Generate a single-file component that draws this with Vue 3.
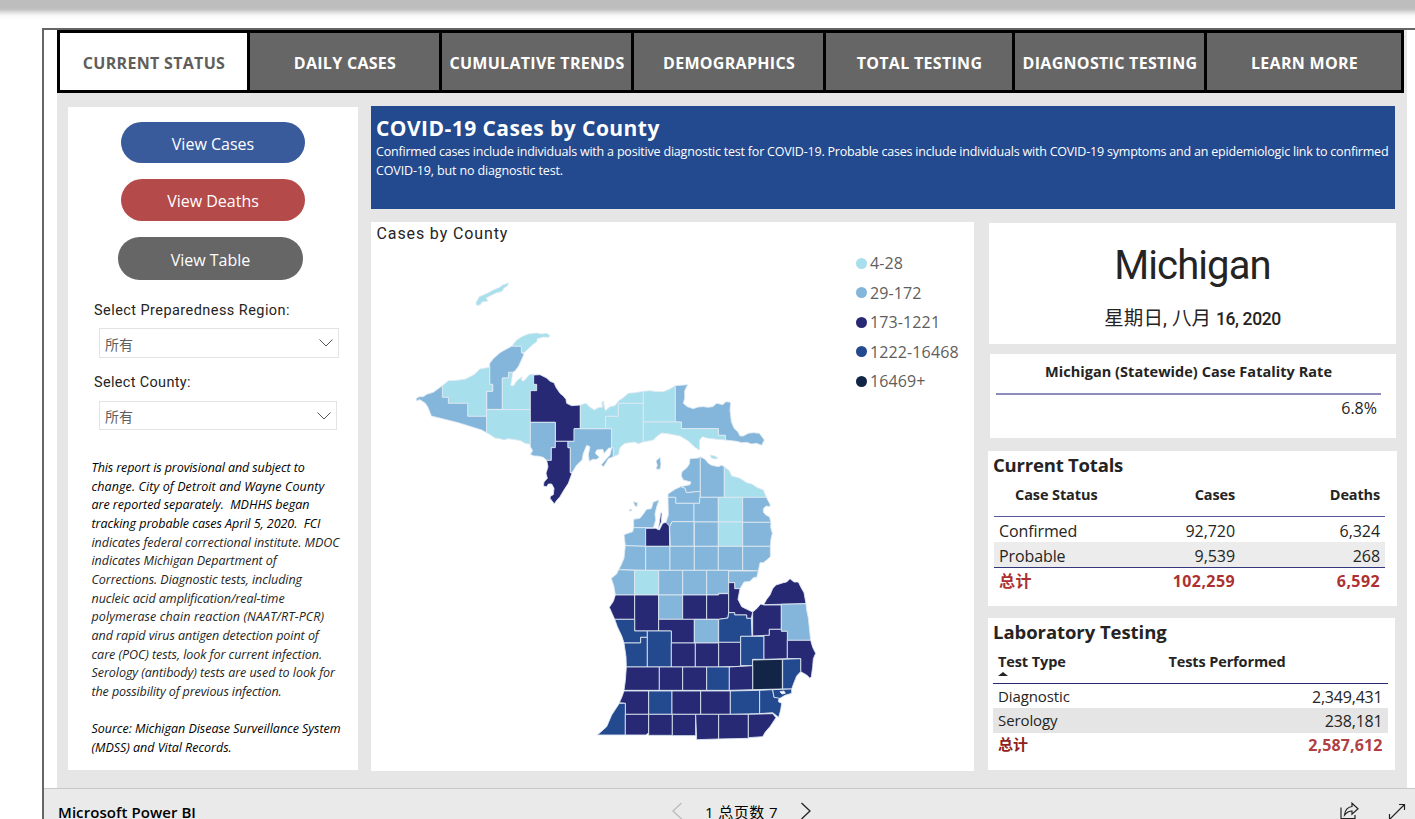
<script setup>
const tabs = ['CURRENT STATUS', 'DAILY CASES', 'CUMULATIVE TRENDS', 'DEMOGRAPHICS', 'TOTAL TESTING', 'DIAGNOSTIC TESTING', 'LEARN MORE']

const notes = [
  'This report is provisional and subject to',
  'change. City of Detroit and Wayne County',
  'are reported separately.\u00a0 MDHHS began',
  'tracking probable cases April 5, 2020.\u00a0 FCI',
  'indicates federal correctional institute. MDOC',
  'indicates Michigan Department of',
  'Corrections. Diagnostic tests, including',
  'nucleic acid amplification/real-time',
  'polymerase chain reaction (NAAT/RT-PCR)',
  'and rapid virus antigen detection point of',
  'care (POC) tests, look for current infection.',
  'Serology (antibody) tests are used to look for',
  'the possibility of previous infection.',
  '\u00a0',
  'Source: Michigan Disease Surveillance System',
  '(MDSS) and Vital Records.',
]

const legend = [
  ['a', '4-28'],
  ['b', '29-172'],
  ['c', '173-1221'],
  ['d', '1222-16468'],
  ['e', '16469+'],
]

// Counties grouped by map section; each entry is [bucket, outline].
const sections = [
  { at: 'translate(400 260) scale(.33333)', counties: [
    ['a', '228,128 238,110 262,100 280,90 300,82 306,76 326,69 322,78 312,84 306,94 288,99 270,108 258,114 264,123 246,126 240,135 230,136'],
    ['a', '335,259 350,240 364,231 385,222 410,219 425,222 440,220 450,227 446,232 430,231 420,234 412,236 410,246 400,252 390,262 372,278 364,278 364,259'],
    ['b', '335,259 364,259 364,278 372,282 366,296 356,318 345,333 338,337 326,337 326,354 307,354 307,448 260,448 260,394 278,394 278,373 269,373 269,310 280,296 300,278 318,268'],
    ['a', '269,322 240,327 222,344 195,358 160,362 145,362 127,377 127,412 145,412 145,430 203,430 203,469 260,469 260,394 278,394 278,373 269,373'],
    ['b', '127,377 100,397 80,403 70,410 58,410 48,416 50,422 60,419 76,430 84,442 94,468 175,488 245,510 260,518 260,469 203,469 203,430 145,430 145,412 127,412'],
    ['a', '326,337 338,337 335,360 332,376 340,378 350,363 366,350 364,360 370,364 378,356 387,345 400,342 401,373 410,373 410,392 391,392 391,449 307,449 307,354 326,354'],
    ['a', '260,449 391,449 391,553 375,550 362,542 345,539 325,536 312,540 300,536 285,534 270,524 260,518'],
    ['c', '401,345 420,344 440,354 450,364 462,368 468,382 480,400 490,408 498,418 500,430 515,437 541,435 541,506 523,506 523,544 466,544 466,487 391,487 391,392 410,392 410,373 401,373'],
    ['b', '391,487 466,487 466,563 454,563 454,601 440,601 430,592 412,588 402,588 391,583 398,572 391,560'],
    ['c', '466,544 504,544 504,563 511,563 511,638 516,640 505,670 492,690 480,710 468,724 463,732 450,715 452,708 460,704 462,685 455,672 445,672 440,680 430,678 432,666 442,655 438,640 444,620 440,601 454,601 454,563 466,563'],
  ] },
  { at: 'translate(560 360) scale(.33333)', counties: [
    ['b', '42,206 155,206 155,263 145,265 133,280 128,268 110,270 106,280 118,292 110,298 98,298 88,304 85,285 90,260 80,256 70,280 66,300 50,315 37,337 31,337 31,263 24,263 24,244 42,244'],
    ['b', '155,263 160,263 160,290 145,296 136,312 130,320 124,314 138,298 150,285'],
    ['a', '61,135 78,130 88,140 103,150 115,143 127,142 126,126 131,124 132,136 136,152 150,140 165,137 176,122 190,113 205,100 225,98 250,94 250,130 175,130 175,169 137,169 137,206 61,206'],
    ['a', '175,130 250,130 250,246 235,251 224,246 210,248 195,250 182,260 178,268 176,283 160,290 160,263 155,263 155,206 137,206 137,169 175,169'],
    ['a', '250,94 270,92 290,95 310,95 328,88 346,77 346,186 250,186'],
    ['b', '346,77 383,74 374,92 374,115 370,130 382,140 400,146 415,141 430,140 445,142 458,140 470,130 488,134 498,125 512,127 510,150 514,185 522,205 534,216 540,228 550,228 565,220 580,218 598,220 613,240 605,256 590,250 575,252 560,247 545,248 530,244 496,240 496,226 475,226 475,206 364,206 364,186 346,186'],
    ['a', '250,186 364,186 364,206 475,206 475,226 496,226 496,240 470,238 440,234 427,230 419,240 418,270 405,262 385,243 360,228 330,222 305,219 292,228 280,240 250,246'],
    ['a', '450,285 465,288 474,294 468,297 455,295'],
    ['b', '288,303 300,292 303,312 300,328 288,327 292,316'],
    ['b', '220,425 232,428 231,440 225,438'],
    ['b', '208,448 216,449 214,453 208,453'],
  ] },
  { at: 'translate(590 440) scale(.33333)', counties: [
    ['b', '300,56 325,54 331,50 331,154 289,158 285,145 272,140 300,134 303,126 280,120 274,108 276,95 290,84 298,72'],
    ['b', '331,50 345,58 355,70 365,76 385,80 395,76 403,80 403,172 331,172'],
    ['a', '403,80 418,92 425,108 440,112 450,115 470,128 485,132 500,142 520,150 529,172 403,172'],
    ['b', '272,140 285,145 289,158 331,154 329,190 257,190 257,172 234,172 234,162 255,148'],
    ['b', '234,172 257,172 257,190 312,190 312,245 246,245 239,260 228,247 235,225'],
    ['b', '312,190 329,190 329,172 385,172 385,246 312,246'],
    ['a', '385,172 458,172 458,246 385,246'],
    ['b', '458,172 529,172 540,193 540,200 528,198 520,206 520,216 527,225 538,230 543,247 458,247'],
    ['b', '131,238 150,235 160,222 170,208 184,206 190,186 207,180 200,200 195,222 197,240 190,263 131,263'],
    ['b', '131,263 167,263 167,319 106,317 102,284 128,275'],
    ['c', '167,265 197,265 208,270 218,250 228,247 238,258 239,319 167,319'],
    ['c', '212,218 216,220 214,246 205,266 210,235'],
    ['b', '239,260 246,245 312,245 312,319 241,319'],
    ['b', '313,246 385,246 385,319 313,319'],
    ['a', '385,246 458,246 458,319 385,319'],
    ['b', '458,247 543,247 542,262 547,280 543,296 541,319 458,319'],
    ['b', '106,317 167,319 167,391 86,389 94,374 102,355'],
    ['b', '167,319 240,319 240,391 167,391'],
    ['b', '240,319 313,319 313,391 240,391'],
    ['b', '313,319 385,319 385,391 313,391'],
    ['b', '385,319 458,319 458,391 385,391'],
    ['b', '458,319 541,319 541,350 530,360 520,368 510,368 505,393 458,391'],
    ['b', '86,389 134,391 134,465 76,465 72,440 64,415 80,402'],
    ['a', '134,391 206,391 206,465 134,465'],
    ['b', '206,391 278,391 278,465 206,465'],
    ['b', '278,391 350,391 350,465 278,465'],
    ['b', '350,391 416,391 416,460 386,460 386,465 350,465'],
    ['b', '416,393 505,393 500,412 492,412 480,424 462,426 450,446 434,446 434,428 416,428'],
  ] },
  { at: 'translate(590 560) scale(.33333)', counties: [
    ['c', '76,105 134,105 134,178 74,178 66,160 58,142 70,124'],
    ['c', '134,105 206,105 206,213 134,213'],
    ['b', '206,105 278,105 278,178 206,178'],
    ['c', '278,105 350,105 350,178 278,178'],
    ['c', '350,105 386,105 386,101 416,101 416,158 414,174 386,178 350,178'],
    ['c', '416,68 434,68 434,86 450,86 444,118 455,140 475,150 488,156 484,175 470,175 470,165 434,165 434,158 416,158'],
    ['d', '74,178 134,178 134,213 172,213 172,232 152,232 152,249 102,249 96,230 82,200'],
    ['c', '206,178 313,178 313,249 244,249 244,213 206,213'],
    ['b', '313,178 385,178 385,249 313,249'],
    ['d', '386,178 414,174 416,158 434,158 434,165 470,165 470,175 484,175 486,229 452,229 452,247 386,247'],
    ['c', '488,156 500,146 512,132 522,135 574,135 574,208 538,208 538,226 488,228'],
    ['c', '522,132 530,118 540,105 548,86 558,75 580,68 590,66 600,56 612,66 625,66 634,84 642,98 648,131 522,134'],
    ['b', '574,133 648,131 650,150 655,175 662,241 592,241 592,214 574,214'],
    ['d', '102,249 152,249 152,232 172,232 172,321 109,321 108,290'],
    ['d', '172,213 244,213 244,321 172,321'],
    ['c', '244,249 316,249 316,321 244,321'],
    ['c', '316,249 386,249 386,321 316,321'],
    ['c', '386,247 452,247 452,319 386,321'],
    ['d', '452,229 522,229 522,298 488,298 488,317 452,317'],
    ['c', '522,226 538,226 538,208 574,208 574,214 592,214 592,296 522,298'],
    ['c', '592,241 662,241 668,262 677,280 670,296 668,320 664,350 660,355 650,345 632,335 632,296 592,296'],
    ['d', '578,298 632,296 632,335 620,348 612,368 605,387 578,387'],
    ['e', '488,300 577,298 577,387 488,389'],
    ['c', '109,321 208,321 208,391 102,391 106,362'],
    ['c', '208,321 278,321 278,391 208,391'],
    ['c', '278,321 350,321 350,391 278,391'],
    ['d', '350,321 418,321 418,391 350,391'],
    ['c', '418,321 488,317 488,389 418,391'],
    ['c', '102,393 176,393 176,463 106,463 106,430 88,428 96,410'],
    ['d', '176,393 246,393 246,463 176,463'],
    ['c', '246,393 332,393 332,463 246,463'],
    ['c', '332,393 421,393 421,463 332,463'],
    ['d', '421,393 509,391 509,461 421,463'],
    ['d', '509,391 548,389 552,412 568,412 565,425 575,430 572,450 566,472 548,458 509,461'],
    ['d', '548,389 605,387 605,400 585,406 570,415 552,412'],
    ['w', '570,395 582,393 586,400 576,402'],
    ['d', '88,430 106,430 106,525 22,525 50,500 65,465'],
    ['c', '106,463 176,463 176,518 168,525 106,525'],
    ['c', '176,463 247,463 247,526 176,526'],
    ['c', '247,463 317,463 317,527 247,527'],
    ['c', '317,463 386,463 386,537 320,539'],
    ['c', '386,463 475,463 475,535 386,537'],
    ['c', '475,463 548,461 558,473 540,500 526,516 518,530 475,533'],
  ] },
]
</script>

<template>
  <div class="page">
    <div class="shade"></div>
    <div class="frame">
      <div class="report">
        <nav class="tabs">
          <div v-for="(t, i) in tabs" :key="t" class="tab" :class="{ active: i === 0 }">{{ t }}</div>
        </nav>
        <div class="body">
          <aside class="side">
            <button class="pill cases">View Cases</button>
            <button class="pill deaths">View Deaths</button>
            <button class="pill table">View Table</button>
            <label class="lab l1">Select Preparedness Region:</label>
            <div class="select s1">所有<svg viewBox="0 0 14 8"><path d="M.5 .5 7 7 13.500 .5" /></svg></div>
            <label class="lab l2">Select County:</label>
            <div class="select s2">所有<svg viewBox="0 0 14 8"><path d="M.5 .5 7 7 13.500 .5" /></svg></div>
            <div class="notes">
              <div v-for="(n, i) in notes" :key="i" :class="{ soft: i > 3 && i < 13, loose: i === 1 || i === 8, tight: i === 0 || i === 12 }">{{ n }}</div>
            </div>
          </aside>
          <main class="main">
            <header class="banner">
              <h1>COVID-19 Cases by County</h1>
              <p>Confirmed cases include individuals with a positive diagnostic test for COVID-19. Probable cases include individuals with COVID-19 symptoms and an epidemiologic link to confirmed</p>
              <p>COVID-19, but no diagnostic test.</p>
            </header>
            <div class="cols">
              <section class="map">
                <h2>Cases by County</h2>
                <svg class="counties" viewBox="371 222 603 549">
                  <g v-for="(s, i) in sections" :key="i" :transform="s.at">
                    <polygon v-for="(c, j) in s.counties" :key="j" :class="'k-' + c[0]" :points="c[1]" />
                  </g>
                </svg>
                <ul class="legend">
                  <li v-for="l in legend" :key="l[0]"><i :class="'k-' + l[0]"></i>{{ l[1] }}</li>
                </ul>
              </section>
              <div class="cards">
                <section class="card state">
                  <div class="name">Michigan</div>
                  <div class="date"><span class="cjk">星期日, 八月 </span>16, 2020</div>
                </section>
                <section class="card rate">
                  <h3>Michigan (Statewide) Case Fatality Rate</h3>
                  <div class="val">6.8%</div>
                </section>
                <section class="card totals">
                  <h4>Current Totals</h4>
                  <div class="row head"><span class="c1">Case Status</span><span class="c2">Cases</span><span class="c3">Deaths</span></div>
                  <div class="row"><span class="c1">Confirmed</span><span class="c2">92,720</span><span class="c3">6,324</span></div>
                  <div class="row alt"><span class="c1">Probable</span><span class="c2">9,539</span><span class="c3">268</span></div>
                  <div class="row sum"><span class="c1">总计</span><span class="c2">102,259</span><span class="c3">6,592</span></div>
                </section>
                <section class="card lab-tests">
                  <h4>Laboratory Testing</h4>
                  <div class="row head"><span class="c1">Test Type</span><span class="c2">Tests Performed</span><i class="sort"></i></div>
                  <div class="row"><span class="c1">Diagnostic</span><span class="c3">2,349,431</span></div>
                  <div class="row alt"><span class="c1">Serology</span><span class="c3">238,181</span></div>
                  <div class="row sum"><span class="c1">总计</span><span class="c3">2,587,612</span></div>
                </section>
              </div>
            </div>
          </main>
        </div>
      </div>
      <footer class="foot">
        <span class="brand">Microsoft Power BI</span>
        <div class="pager">
          <svg class="off" viewBox="0 0 12 18"><path d="M10.500 1 2 9l8.500 8" /></svg>
          <span>1 总页数 7</span>
          <svg viewBox="0 0 12 18"><path d="M1.500 1 10 9l-8.500 8" /></svg>
        </div>
        <svg class="share" viewBox="0 0 19 18"><path d="M1 5.500V16.500H15V13M4.500 13C5 8 8 5 12 4.500V1.200L18 6.700 12 12.200V9C9 9 7 10 4.500 13Z" /></svg>
        <svg class="expand" viewBox="0 0 18 18"><path d="M1.500 16.500 16.500 1.500M11 1.500h5.500V7M1.500 11v5.500H7" /></svg>
      </footer>
    </div>
  </div>
</template>

<style>
html, body { overflow: hidden; background: #fff; }
</style>
<style scoped>
.page { width: 1415px; height: 819px; overflow: hidden; background: #fff; color: #252423; font-family: "Open Sans", "Noto Sans CJK SC", sans-serif; font-size: 16px; white-space: nowrap; }
.page * { box-sizing: border-box; }
h1, h2, h3, h4, p, ul { margin: 0; padding: 0; }
.shade { height: 28px; background: linear-gradient(#bdbdbd 0, #bdbdbd 8px, #c6c6c6 10px, #e6e6e6 13px, #f9f9f9 16px, #fff 20px); }
.frame { margin-left: 42px; height: 791px; border-left: 2px solid #666; border-top: 2px solid #666; display: flex; flex-direction: column; }
.report { flex: none; margin-left: 13px; width: 1350px; height: 758px; background: #e6e6e6; }
.tabs { width: 1347px; height: 63px; padding: 3px; background: #000; display: grid; grid-template-columns: 187px 189px 189px 189px 186px 189px 194px; column-gap: 3px; }
.tab { background: #666; color: #fff; font-weight: 700; font-size: 16px; letter-spacing: .3px; display: flex; align-items: center; justify-content: center; padding: 2px 0 0 1px; }
.tab.active { background: #fff; color: #605e5c; }
.body { display: flex; padding: 14px 0 0 11px; }
.side { width: 290px; height: 663px; background: #fff; display: flex; flex-direction: column; align-items: flex-start; padding: 15px 0 0 26px; }
.pill { border: 0; padding: 2px 0 0; border-radius: 22px; color: #fff; font: 400 16px "Open Sans", sans-serif; width: 184px; margin-left: 27px; }
.cases { height: 41px; background: #3a5b9b; }
.deaths { height: 42px; margin-top: 16px; background: #b54a4a; }
.table { height: 43px; width: 185px; margin: 16px 0 0 24px; background: #666; }
.lab { height: 20px; line-height: 22px; font-family: Roboto, sans-serif; font-size: 14.500px; font-weight: 400; letter-spacing: .44px; }
.l1 { margin-top: 20px; }
.l2 { margin-top: 14px; letter-spacing: .33px; }
.select { margin-left: 5px; border: 1px solid #e3e3e3; display: flex; align-items: center; justify-content: space-between; padding: 1px 5px 0 5px; color: #605e5c; font-size: 14px; }
.select svg { width: 14px; height: 8px; margin-top: -1px; fill: none; stroke: #555; }
.s1 { width: 240px; height: 30px; margin-top: 8px; }
.s2 { width: 238px; height: 29px; margin-top: 9px; }
.notes { margin: 29px 0 0 -2.500px; font-size: 12.500px; line-height: 18.670px; letter-spacing: -.03px; font-style: italic; color: #000; }
.notes .soft { color: #252423; letter-spacing: -.045px; }
.notes .loose { letter-spacing: .1px; }
.notes .tight { letter-spacing: -.1px; }
.main { margin-left: 13px; margin-top: -1px; }
.banner { width: 1024px; height: 103px; background: #23498f; color: #fff; padding: 9px 0 0 5px; }
.banner h1 { font-size: 21px; line-height: 27px; font-weight: 700; letter-spacing: .45px; }
.banner p { font-size: 12.500px; line-height: 19px; letter-spacing: -.205px; }
.banner p + p { letter-spacing: -.14px; }
.cols { display: flex; padding-top: 13px; }
.map { position: relative; width: 603px; height: 549px; background: #fff; }
.map h2 { position: absolute; left: 5.500px; top: 2px; font: 400 16px/20px Roboto, sans-serif; letter-spacing: .88px; }
.counties { display: block; width: 603px; height: 549px; }
.counties polygon { stroke: #dfe9f2; stroke-width: 2.600px; stroke-linejoin: round; }
.counties .k-w { fill: #fff; }
.k-a { fill: #a7dfec; background: #a7dfec; }
.k-b { fill: #83b6da; background: #83b6da; }
.k-c { fill: #272974; background: #272974; }
.k-d { fill: #23498f; background: #23498f; }
.k-e { fill: #122547; background: #122547; }
.legend { position: absolute; left: 485px; top: 26.500px; list-style: none; color: #605e5c; font-size: 16px; letter-spacing: .12px; }
.legend li { height: 29.500px; display: flex; align-items: center; gap: 3px; }
.legend i { width: 11px; height: 11px; border-radius: 50%; }
.cards { margin-left: 14px; }
.card { background: #fff; }
.state { width: 407px; height: 121px; margin: 1px 0 0 1px; text-align: center; padding-top: 18px; font-family: Roboto, "Noto Sans CJK SC", sans-serif; }
.name { font-size: 40px; line-height: 49px; letter-spacing: -.9px; }
.date { font-size: 17.500px; line-height: 26px; margin-top: 16px; font-weight: 500; letter-spacing: -.4px; }
.cjk { font-size: 19.500px; font-weight: 400; letter-spacing: .1px; white-space: pre; }
.rate { width: 406px; height: 84px; margin: 10px 0 0 2px; padding: 7px 15px 0 6px; }
.rate h3 { height: 34px; line-height: 22px; font-size: 14.500px; font-weight: 700; letter-spacing: .04px; text-align: center; border-bottom: 2px solid #8d8cba; }
.rate .val { text-align: right; padding-right: 4px; line-height: 26px; }
.totals { width: 409px; height: 155px; margin-top: 13px; padding: 2px 12px 0 6px; }
h4 { font-size: 18.500px; font-weight: 700; line-height: 24px; letter-spacing: -.2px; margin-left: -1px; }
.row { display: flex; position: relative; }
.row .c1 { flex: 1; letter-spacing: -.1px; }
.totals .c1 { padding-left: 5px; }
.totals .c2 { width: 120px; text-align: right; }
.totals .c3 { width: 150px; text-align: right; padding-right: 5px; }
.totals .row { height: 25px; line-height: 28px; letter-spacing: -.07px; }
.totals .head { height: 40px; line-height: 35px; font-size: 14.500px; font-weight: 700; letter-spacing: -.15px; border-bottom: 1px solid #5558a0; }
.totals .head .c1 { padding-left: 21px; }
.totals .alt { background: #ececec; height: 26px; border-bottom: 1px solid #34377d; }
.totals .sum { color: #ad3131; font-weight: 700; line-height: 27px; }
.totals .sum span { letter-spacing: .4px; }
.lab-tests { width: 407px; height: 152px; margin-top: 12px; padding: 2px 7px 0 5px; }
.lab-tests h4 { padding-left: 1px; letter-spacing: -.06px; height: 25px; }
.lab-tests .row { height: 24px; line-height: 25px; font-size: 15px; padding: 0 5.500px 0 5px; }
.lab-tests .row .c3 { font-size: 16px; line-height: 27px; letter-spacing: -.2px; }
.lab-tests .head { height: 39px; line-height: 33px; font-size: 14.500px; font-weight: 700; letter-spacing: -.12px; border-bottom: 1px solid #272974; }
.lab-tests .head .c2 { width: 214px; }
.lab-tests .alt { background: #e5e5e5; height: 25px; }
.lab-tests .sum { color: #8f1f22; font-weight: 700; line-height: 23px; }
.lab-tests .row.sum .c3 { color: #b04044; line-height: 25px; letter-spacing: .12px; }
.sort { position: absolute; left: 5px; top: 27px; border: 5.500px solid transparent; border-top: 0; border-bottom: 4.500px solid #252423; }
.foot { flex: none; height: 50px; border-top: 1px solid #c8c8c8; background: #eaeaea; color: #000; display: flex; align-items: flex-start; }
.brand { margin: 11px 0 0 14px; width: 613px; font-size: 15px; line-height: 24px; font-weight: 600; letter-spacing: .06px; }
.pager { display: flex; align-items: flex-start; font-size: 15px; line-height: 24px; padding-top: 11px; width: 668px; }
.pager svg { width: 12px; height: 18px; margin-top: 2px; fill: none; stroke: #222; stroke-width: 1.300px; }
.pager span { margin: 0 22px 0 22px; width: 73px; letter-spacing: .44px; }
.pager .off { stroke: #bbb; }
.share, .expand { fill: none; stroke: #222; stroke-width: 1.200px; }
.share { width: 19px; height: 18px; margin: 13px 0 0 .5px; }
.expand { width: 18px; height: 18px; margin: 14px 0 0 29px; }
</style>
